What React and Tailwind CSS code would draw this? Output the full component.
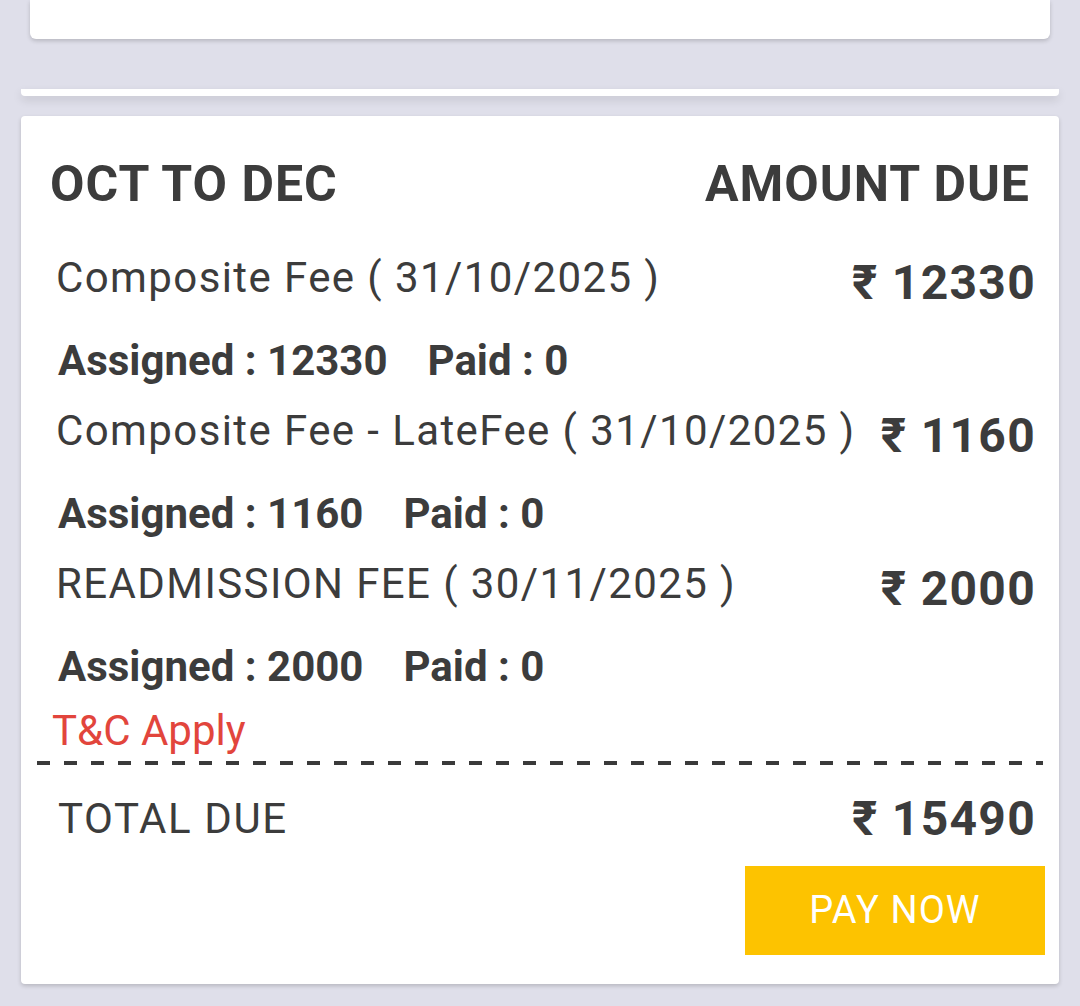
import React from "react";

const fees = [
  { name: "Composite Fee ( 31/10/2025 )", amount: "12330", assigned: "12330", paid: "0" },
  { name: "Composite Fee - LateFee ( 31/10/2025 )", amount: "1160", assigned: "1160", paid: "0" },
  { name: "READMISSION FEE ( 30/11/2025 )", amount: "2000", assigned: "2000", paid: "0" },
];

/* ── one fee line + its assigned / paid row ─────────────────────────── */
const FeeBlock = ({ fee, first }) => (
  <div className={first ? "mt-[39px]" : "mt-[20px]"}>
    <div className="flex items-start justify-between pl-[35px] pr-[23px]">
      <span className="text-[42px] leading-[50px] tracking-[1.4px] whitespace-nowrap">{fee.name}</span>
      <span className="text-[48px] leading-[60px] font-bold tracking-[1.3px] whitespace-nowrap">
        ₹ {fee.amount}
      </span>
    </div>
    <div className="mt-[23px] flex gap-[40px] pl-[37px] text-[42px] leading-[50px] font-bold">
      <span>Assigned : {fee.assigned}</span>
      <span>Paid : {fee.paid}</span>
    </div>
  </div>
);

export default function App() {
  return (
    <div className="min-h-screen bg-[#dfdfea] font-['Roboto',sans-serif] text-[#3c3c3c] overflow-hidden">
      {/* previous card (cut off at the top) */}
      <div className="mx-[30px] h-[39px] rounded-b-[6px] bg-white shadow-[0_2px_4px_rgba(0,0,0,0.18)]" />

      {/* collapsed strip */}
      <div className="mx-[21px] mt-[50px] h-[7px] rounded-b-[4px] bg-white shadow-[0_4px_10px_rgba(0,0,0,0.12)]" />

      {/* fee card */}
      <div className="mx-[21px] mt-[20px] rounded-[4px] bg-white pb-[29px] pt-[38px] shadow-[0_2px_4px_rgba(0,0,0,0.18)]">
        <div className="flex justify-between pl-[29px] pr-[29px] text-[50px] leading-[60px] font-bold tracking-[1px]">
          <span>OCT TO DEC</span>
          <span>AMOUNT DUE</span>
        </div>

        {fees.map((fee, i) => (
          <FeeBlock key={fee.name} fee={fee} first={i === 0} />
        ))}

        <p className="mt-[14px] pl-[31px] text-[42px] leading-[50px] text-[#e2453c]">T&amp;C Apply</p>

        <div className="mx-[16px] mt-[5px] h-[4px] bg-[linear-gradient(to_right,#3a3a3a_13px,transparent_13px)] bg-[length:27px_4px] bg-repeat-x" />

        <div className="mt-[29px] flex items-start justify-between pl-[37px] pr-[23px]">
          <span className="text-[42px] leading-[50px] tracking-[1.6px]">TOTAL DUE</span>
          <span className="text-[48px] leading-[50px] font-bold tracking-[1.3px]">₹ 15490</span>
        </div>

        <div className="mt-[22px] flex justify-end pr-[14px]">
          <button className="flex h-[89px] w-[300px] items-center justify-center bg-[#fdc300] text-[38px] tracking-[1.1px] text-white">
            PAY NOW
          </button>
        </div>
      </div>
    </div>
  );
}
